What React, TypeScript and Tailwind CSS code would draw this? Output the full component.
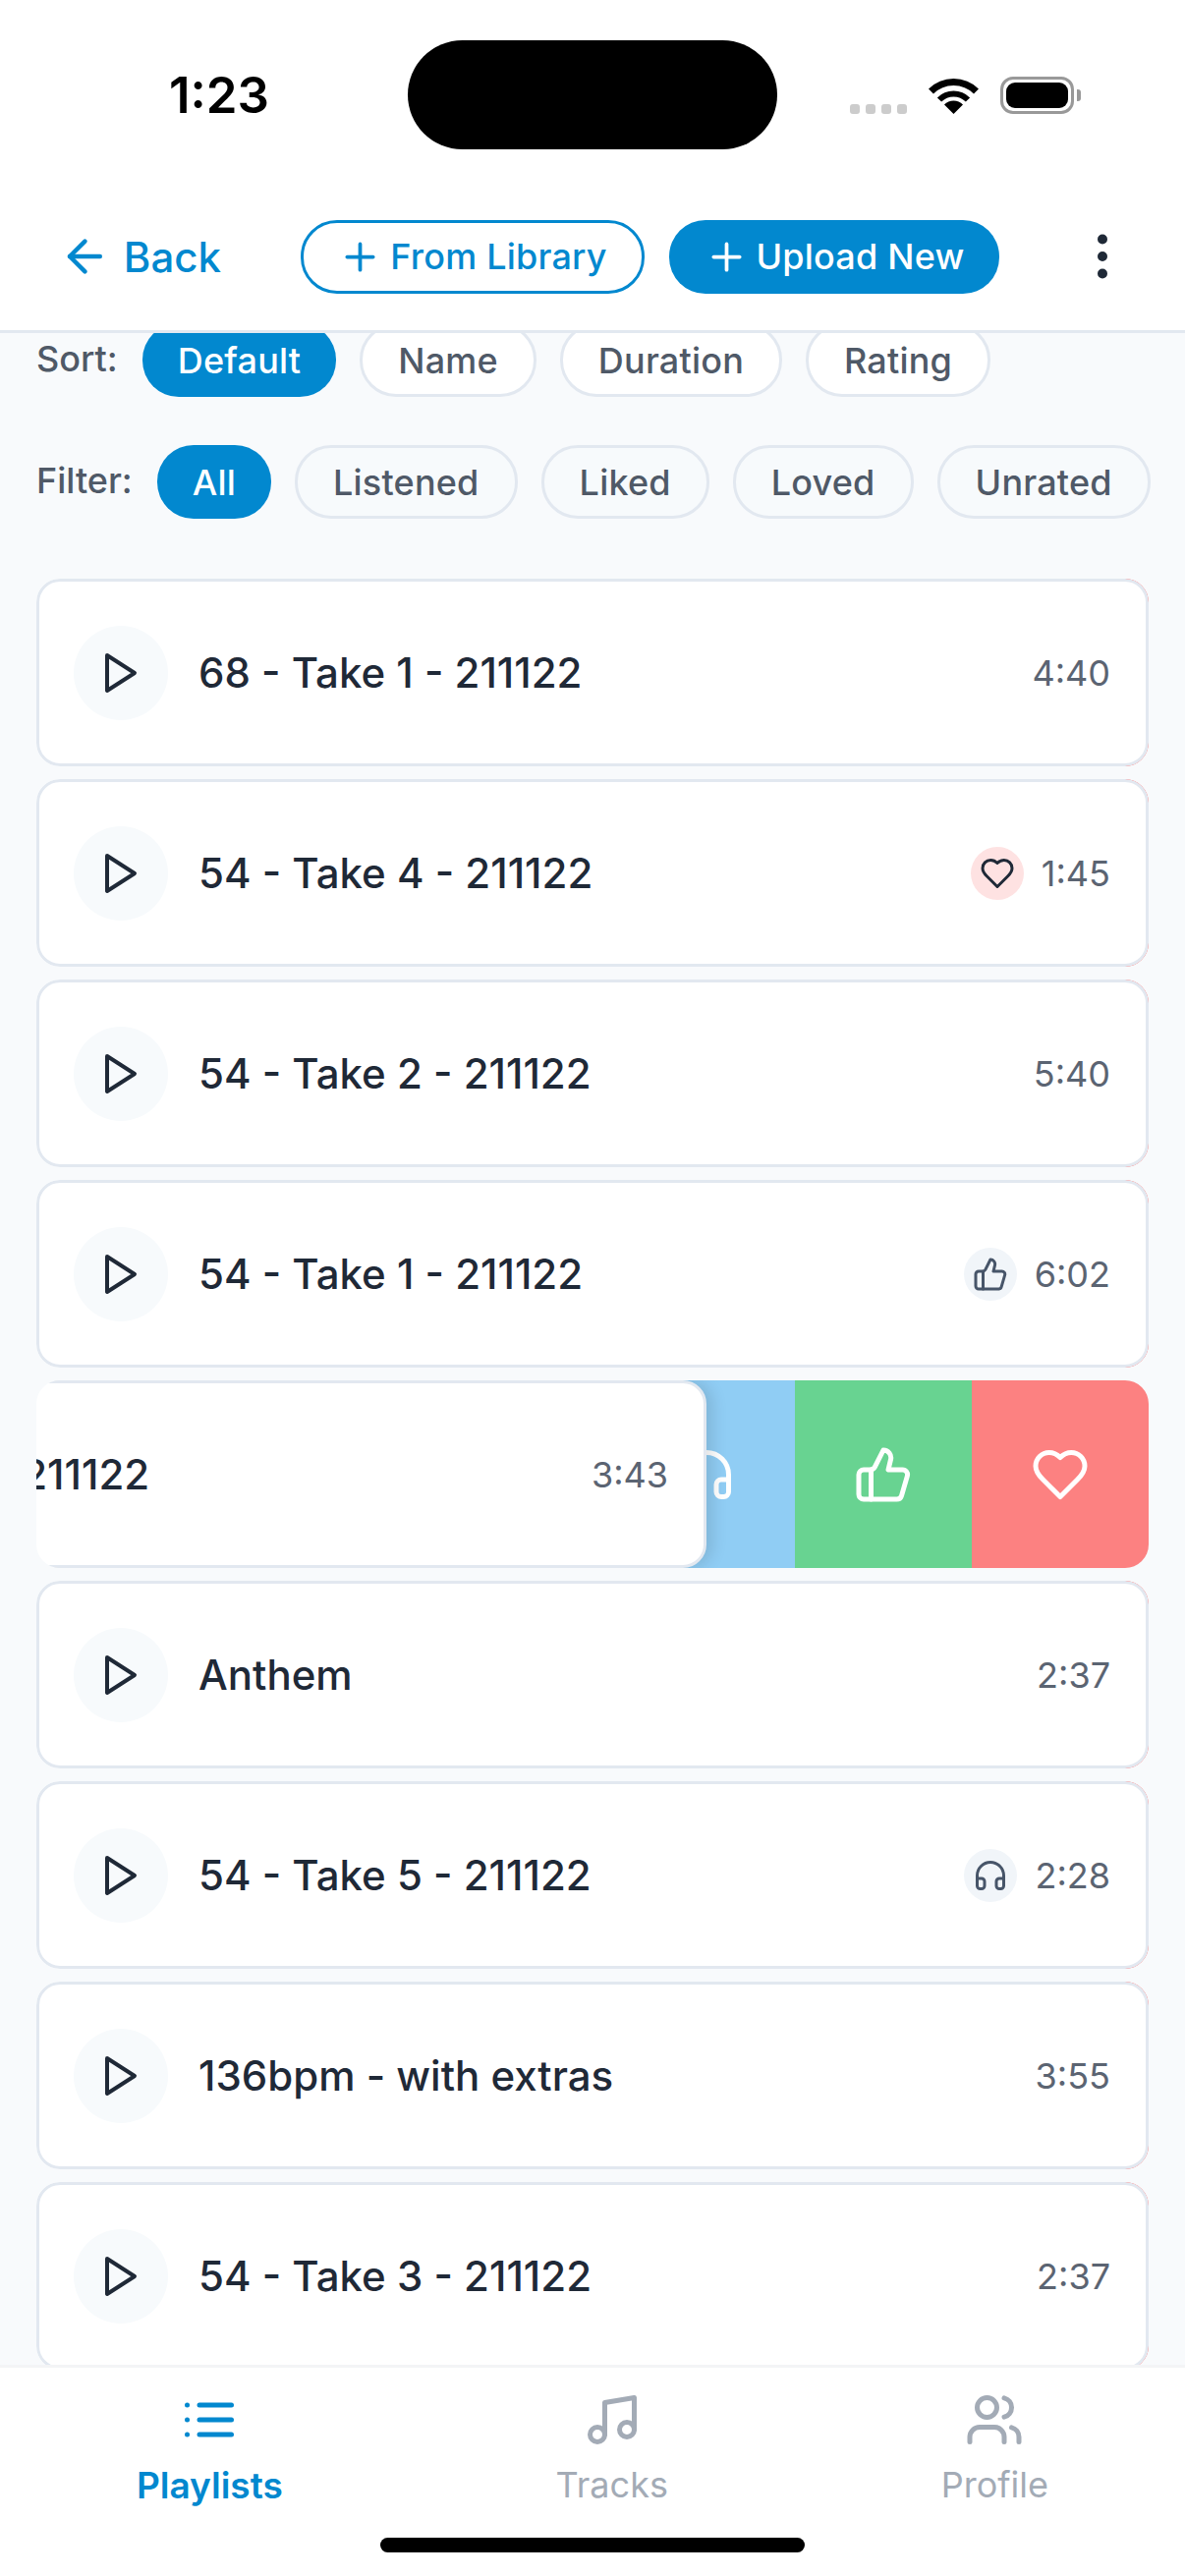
import { ReactNode } from "react";

const sortOptions = ["Default", "Name", "Duration", "Rating"];
const filterOptions = ["All", "Listened", "Liked", "Loved", "Unrated"];

type Rating = "loved" | "liked" | "listened";

interface Track {
  title: string;
  time: string;
  rating?: Rating;
  swiped?: boolean;
}

const tracks: Track[] = [
  { title: "68 - Take 1 - 211122", time: "4:40" },
  { title: "54 - Take 4 - 211122", time: "1:45", rating: "loved" },
  { title: "54 - Take 2 - 211122", time: "5:40" },
  { title: "54 - Take 1 - 211122", time: "6:02", rating: "liked" },
  { title: "54 - Take 6 - 211122", time: "3:43", swiped: true },
  { title: "Anthem", time: "2:37" },
  { title: "54 - Take 5 - 211122", time: "2:28", rating: "listened" },
  { title: "136bpm - with extras", time: "3:55" },
  { title: "54 - Take 3 - 211122", time: "2:37" },
];

const Icon = ({ className, children }: { className: string; children: ReactNode }) => (
  <svg
    viewBox="0 0 24 24"
    fill="none"
    stroke="currentColor"
    strokeWidth={2}
    strokeLinecap="round"
    strokeLinejoin="round"
    className={className}
  >
    {children}
  </svg>
);

const PlayIcon = ({ className }: { className: string }) => (
  <Icon className={className}>
    <polygon points="5 3 19 12 5 21 5 3" />
  </Icon>
);

const HeartIcon = ({ className }: { className: string }) => (
  <Icon className={className}>
    <path d="M19 14c1.49-1.46 3-3.21 3-5.5A5.5 5.5 0 0 0 16.5 3c-1.76 0-3 .5-4.5 2-1.5-1.5-2.74-2-4.5-2A5.5 5.5 0 0 0 2 8.5c0 2.3 1.5 4.05 3 5.5l7 7Z" />
  </Icon>
);

const ThumbIcon = ({ className }: { className: string }) => (
  <Icon className={className}>
    <path d="M7 10v12" />
    <path d="M15 5.88 14 10h5.83a2 2 0 0 1 1.92 2.56l-2.33 8A2 2 0 0 1 17.5 22H4a2 2 0 0 1-2-2v-8a2 2 0 0 1 2-2h2.76a2 2 0 0 0 1.79-1.11L12 2a3.13 3.13 0 0 1 3 3.88Z" />
  </Icon>
);

const HeadphonesIcon = ({ className }: { className: string }) => (
  <Icon className={className}>
    <path d="M3 14h3a2 2 0 0 1 2 2v3a2 2 0 0 1-2 2H5a2 2 0 0 1-2-2v-7a9 9 0 0 1 18 0v7a2 2 0 0 1-2 2h-1a2 2 0 0 1-2-2v-3a2 2 0 0 1 2-2h3" />
  </Icon>
);

const PlusIcon = ({ className }: { className: string }) => (
  <Icon className={className}>
    <path d="M5 12h14" />
    <path d="M12 5v14" />
  </Icon>
);

const StatusBar = () => (
  <div className="mt-[41px] mb-[34px] flex h-[111px] shrink-0 items-center">
    <span className="ml-[172px] w-[100px] text-[51px] leading-none font-semibold text-black">1:23</span>
    <div className="ml-[143px] h-[111px] w-[376px] rounded-[56px] bg-black" />
    <div className="ml-[74px] flex items-end">
      <div className="flex gap-[6px]">
        <span className="size-[10px] rounded-[3px] bg-[#cccccc]" />
        <span className="size-[10px] rounded-[3px] bg-[#cccccc]" />
        <span className="size-[10px] rounded-[3px] bg-[#cccccc]" />
        <span className="size-[10px] rounded-[3px] bg-[#cccccc]" />
      </div>
      <svg viewBox="0 0 51 37" className="ml-[22px] h-[37px] w-[51px]" fill="none" stroke="black">
        <path d="M2.5 14A32.5 32.5 0 0 1 48.5 14" strokeWidth={7} />
        <path d="M11 22.5A20.5 20.5 0 0 1 40 22.5" strokeWidth={6} />
        <path d="M25.5 37 16 27.5A13.4 13.4 0 0 1 35 27.5Z" fill="black" stroke="none" />
      </svg>
      <div className="ml-[22px] flex items-center">
        <div className="flex h-[38px] w-[75px] items-center justify-center rounded-[13px] border-[3px] border-[#999999]">
          <div className="h-[26px] w-[63px] rounded-[9px] bg-black" />
        </div>
        <div className="ml-[3px] h-[12px] w-[4px] rounded-r-[3px] bg-[#999999]" />
      </div>
    </div>
  </div>
);

const Header = () => (
  <header className="flex h-[153px] shrink-0 items-center border-b-[3px] border-[#e2e8f0] bg-white pl-[60px] text-[#0288cf]">
    <div className="flex w-[165px] items-center">
      <Icon className="size-[54px]">
        <path d="m12 19-7-7 7-7" />
        <path d="M19 12H5" />
      </Icon>
      <span className="ml-[13px] text-[42px] font-[450]">Back</span>
    </div>
    <button className="ml-[81px] flex h-[75px] w-[350px] items-center justify-center rounded-[37px] border-[3px] border-[#0288cf] bg-white text-[36px] font-[450] tracking-[0.2px]">
      <PlusIcon className="size-[45px]" />
      <span className="ml-[8px]">From Library</span>
    </button>
    <button className="ml-[25px] flex h-[75px] w-[336px] items-center justify-center rounded-[37px] bg-[#0288cf] text-[36px] font-[450] tracking-[0.2px] text-white">
      <PlusIcon className="size-[45px]" />
      <span className="ml-[8px]">Upload New</span>
    </button>
    <Icon className="ml-[75px] size-[60px] text-[#1f2937]">
      <circle cx="12" cy="5" r="1" />
      <circle cx="12" cy="12" r="1" />
      <circle cx="12" cy="19" r="1" />
    </Icon>
  </header>
);

const Chip = ({ label, active, tinted }: { label: string; active: boolean; tinted?: boolean }) => (
  <span
    className={
      active
        ? "flex h-[75px] items-center rounded-[37px] bg-[#0288cf] px-[36px] text-[36px] font-[450] tracking-[0.2px] text-white"
        : tinted
          ? "flex h-[75px] items-center rounded-[37px] border-[3px] border-[#e2e8f0] bg-[#f7fafc] px-[36px] text-[36px] font-[450] tracking-[0.2px] text-[#4f5967]"
          : "flex h-[75px] items-center rounded-[37px] border-[3px] border-[#e2e8f0] bg-white px-[36px] text-[36px] font-[450] tracking-[0.2px] text-[#4f5967]"
    }
  >
    {label}
  </span>
);

const TrackRow = ({ track }: { track: Track }) => (
  <div className="relative h-[191px] shrink-0 overflow-hidden rounded-[24px]">
    <div className="absolute inset-y-0 right-0 flex text-white">
      <div className="flex w-[180px] items-center justify-center bg-[#90cdf4]">
        <HeadphonesIcon className="size-[60px]" />
      </div>
      <div className="flex w-[180px] items-center justify-center bg-[#68d391]">
        <ThumbIcon className="size-[60px]" />
      </div>
      <div className="flex w-[180px] items-center justify-center bg-[#fc8181]">
        <HeartIcon className="size-[60px]" />
      </div>
    </div>
    <div
      className={
        track.swiped
          ? "relative flex h-full -translate-x-[450px] items-center rounded-[24px] border-[3px] border-[#e2e8f0] bg-white pr-[36px] pl-[35px] shadow-[6px_0_16px_rgba(0,0,0,0.12)]"
          : "relative flex h-full items-center rounded-[24px] border-[3px] border-[#e2e8f0] bg-white pr-[36px] pl-[35px]"
      }
    >
      <div className="flex size-[96px] shrink-0 items-center justify-center rounded-full bg-[#f7fafc] text-[#1f2937]">
        <PlayIcon className="size-[48px]" />
      </div>
      <span className="ml-[31px] flex-1 text-[42px] font-[450] text-[#1f2937]">{track.title}</span>
      {track.rating === "loved" && (
        <div className="mr-[18px] flex size-[54px] items-center justify-center rounded-full bg-[#fee2e2] text-[#1f2937]">
          <HeartIcon className="size-[36px]" />
        </div>
      )}
      {track.rating === "liked" && (
        <div className="mr-[18px] flex size-[54px] items-center justify-center rounded-full bg-[#f1f5f9] text-[#475569]">
          <ThumbIcon className="size-[36px]" />
        </div>
      )}
      {track.rating === "listened" && (
        <div className="mr-[18px] flex size-[54px] items-center justify-center rounded-full bg-[#f1f5f9] text-[#475569]">
          <HeadphonesIcon className="size-[36px]" />
        </div>
      )}
      <span className="text-[36px] text-[#5b6472]">{track.time}</span>
    </div>
  </div>
);

const TabBar = () => (
  <nav className="flex h-[215px] shrink-0 justify-around border-t-[3px] border-[#f3f4f6] bg-white pt-[23px] text-[#a3abb6]">
    <div className="flex flex-col items-center text-[#0288cf]">
      <Icon className="size-[60px]">
        <path d="M3 6h.01" />
        <path d="M3 12h.01" />
        <path d="M3 18h.01" />
        <path d="M8 6h13" />
        <path d="M8 12h13" />
        <path d="M8 18h13" />
      </Icon>
      <span className="mt-[9px] text-[37px] font-semibold">Playlists</span>
    </div>
    <div className="flex flex-col items-center">
      <Icon className="size-[60px]">
        <path d="M9 18V5l12-2v13" />
        <circle cx="6" cy="18" r="3" />
        <circle cx="18" cy="16" r="3" />
      </Icon>
      <span className="mt-[9px] text-[36px] font-normal">Tracks</span>
    </div>
    <div className="flex flex-col items-center">
      <Icon className="size-[60px]">
        <path d="M16 21v-2a4 4 0 0 0-4-4H6a4 4 0 0 0-4 4v2" />
        <circle cx="9" cy="7" r="4" />
        <path d="M22 21v-2a4 4 0 0 0-3-3.87" />
        <path d="M16 3.13a4 4 0 0 1 0 7.75" />
      </Icon>
      <span className="mt-[9px] text-[36px] font-normal">Profile</span>
    </div>
  </nav>
);

export default function App() {
  return (
    <div className="relative flex h-[2622px] w-[1206px] flex-col overflow-hidden bg-white font-['Inter',sans-serif]">
      <StatusBar />
      <Header />
      <main className="min-h-0 flex-1 overflow-hidden bg-[#f8fafc] px-[37px]">
        <div className="-mt-[10px] flex items-center gap-[24px]">
          <span className="mr-[1px] mb-[3px] text-[36px] font-[450] text-[#4f5967]">Sort:</span>
          {sortOptions.map((option, i) => (
            <Chip key={option} label={option} active={i === 0} />
          ))}
        </div>
        <div className="mt-[49px] flex items-center gap-[24px]">
          <span className="mr-[1px] mb-[3px] text-[36px] font-[450] text-[#4f5967]">Filter:</span>
          {filterOptions.map((option, i) => (
            <Chip key={option} label={option} active={i === 0} tinted />
          ))}
        </div>
        <div className="mt-[61px] flex flex-col gap-[13px]">
          {tracks.map((track) => (
            <TrackRow key={track.title + track.time} track={track} />
          ))}
        </div>
      </main>
      <TabBar />
      <div className="absolute bottom-[24px] left-[387px] h-[15px] w-[432px] rounded-full bg-black" />
    </div>
  );
}
